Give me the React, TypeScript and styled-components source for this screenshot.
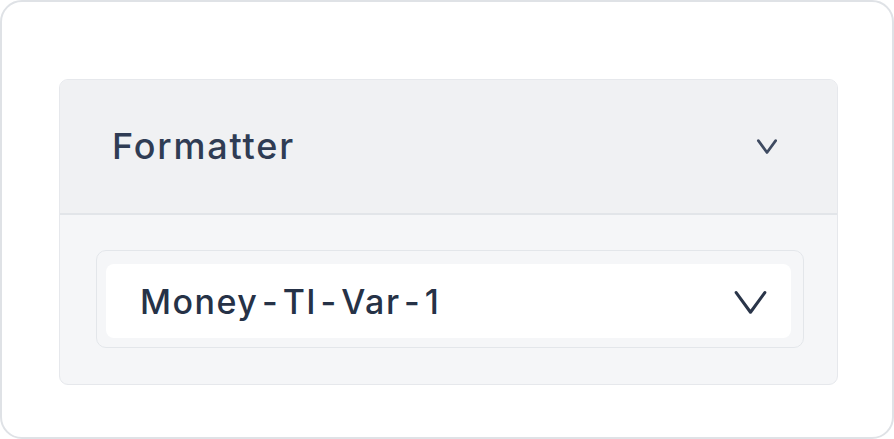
import React from "react";
import styled, { createGlobalStyle } from "styled-components";

const Global = createGlobalStyle`
  html, body { margin: 0; padding: 0; background: #ffffff; }
  body { font-family: Inter, "Noto Sans", sans-serif; }
`;

const Frame = styled.div`
  box-sizing: border-box;
  width: 894px;
  height: 439px;
  border: 2px solid #dfe2e6;
  border-radius: 22px;
  background: #ffffff;
  padding: 77px 55px 0 57px;
`;

const Card = styled.section`
  box-sizing: border-box;
  width: 779px;
  height: 306px;
  border: 1px solid #e6e8ec;
  border-radius: 9px;
  overflow: hidden;
  background: #f5f6f8;
  display: flex;
  flex-direction: column;
`;

const Header = styled.div`
  box-sizing: border-box;
  height: 135px;
  flex: none;
  background: #f0f1f3;
  border-bottom: 2px solid #e2e5e9;
  display: flex;
  align-items: center;
  justify-content: space-between;
  padding: 0 57px 2px 52px;
`;

const Title = styled.h2`
  margin: 0;
  font-family: Inter, "Noto Sans", sans-serif;
  font-weight: 500;
  font-size: 36px;
  letter-spacing: 1.8px;
  color: #2f3c54;
`;

const Body = styled.div`
  flex: 1;
  padding: 35px 33px 0 36px;
`;

const SelectShell = styled.div`
  box-sizing: border-box;
  height: 98px;
  border: 1.5px solid #e3e6ea;
  border-radius: 10px;
  padding: 13px 12px 9px 9px;
  background: #f5f6f8;
`;

const SelectField = styled.div`
  box-sizing: border-box;
  height: 100%;
  background: #ffffff;
  border-radius: 8px;
  display: flex;
  align-items: center;
  justify-content: space-between;
  padding: 0 19px 0 34px;
`;

const Value = styled.span`
  font-family: Inter, "Noto Sans", sans-serif;
  font-weight: 500;
  font-size: 34px;
  letter-spacing: 1.5px;
  color: #263247;
`;

const Dash = styled.span`
  margin: 0 3.5px;
`;

const Chevron = ({ size, stroke, color }: { size: number; stroke: number; color: string }) => (
  <svg width={size} height={size} viewBox="0 0 24 24" fill="none">
    <path d="M4 7 L12 18 L20 7" stroke={color} strokeWidth={stroke} strokeLinecap="round" strokeLinejoin="round" />
  </svg>
);

export default function App() {
  return (
    <>
      <Global />
      <Frame>
        <Card>
          <Header>
            <Title>Formatter</Title>
            <Chevron size={26} stroke={2.5} color="#3f4b61" />
          </Header>
          <Body>
            <SelectShell>
              <SelectField>
                <Value>
                  Money<Dash>-</Dash>TI<Dash>-</Dash>Var<Dash>-</Dash>1
                </Value>
                <Chevron size={43} stroke={1.7} color="#2a3549" />
              </SelectField>
            </SelectShell>
          </Body>
        </Card>
      </Frame>
    </>
  );
}
